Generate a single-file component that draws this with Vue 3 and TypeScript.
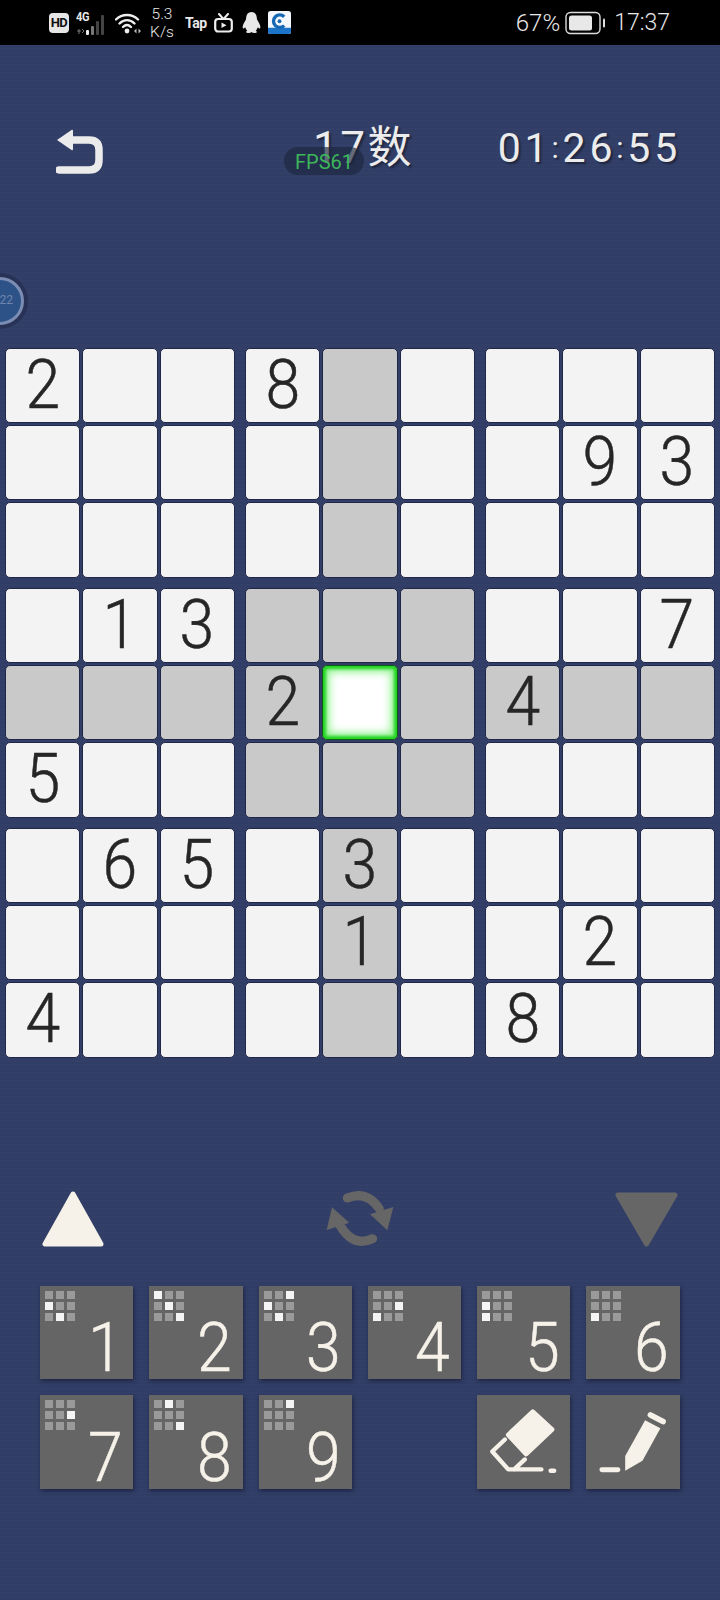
<script setup lang="ts">
const givens: Record<string, number> = {
  '0-0': 2, '0-3': 8, '1-7': 9, '1-8': 3, '3-1': 1, '3-2': 3, '3-8': 7,
  '4-3': 2, '4-6': 4, '5-0': 5, '6-1': 6, '6-2': 5, '6-4': 3, '7-4': 1,
  '7-7': 2, '8-0': 4, '8-6': 8,
}
interface Cell { key: string; value: string; grey: boolean; sel: boolean }
const blocks: Cell[][] = []
for (let br = 0; br < 3; br++) {
  for (let bc = 0; bc < 3; bc++) {
    const cells: Cell[] = []
    for (let r = br * 3; r < br * 3 + 3; r++) {
      for (let c = bc * 3; c < bc * 3 + 3; c++) {
        const v = givens[`${r}-${c}`]
        cells.push({
          key: `${r}-${c}`,
          value: v ? String(v) : '',
          sel: r === 4 && c === 4,
          grey: r === 4 || c === 4 || (br === 1 && bc === 1),
        })
      }
    }
    blocks.push(cells)
  }
}
const keys: { n: number; on: number[] }[] = [
  { n: 1, on: [3, 7] },
  { n: 2, on: [0, 4, 8] },
  { n: 3, on: [2, 3, 7] },
  { n: 4, on: [5, 6] },
  { n: 5, on: [3, 6] },
  { n: 6, on: [6] },
  { n: 7, on: [5] },
  { n: 8, on: [1, 8] },
  { n: 9, on: [2] },
]
const mini = [0, 1, 2, 3, 4, 5, 6, 7, 8]
</script>

<template>
  <div class="page">
    <div class="status">
      <div class="hd">HD</div>
      <div class="net">
        <span class="g4">4G</span>
        <svg class="sig" width="34" height="22" viewBox="0 0 34 22">
          <path d="M2 17h4M7 15l2 2-2 2M4 15v5" stroke="#777" stroke-width="1" fill="none" />
          <rect x="11" y="16" width="3" height="5" rx="1" fill="#eee" />
          <rect x="16" y="12" width="3" height="9" rx="1" fill="#777" />
          <rect x="21" y="7" width="3" height="14" rx="1" fill="#444" />
          <rect x="26" y="1" width="3" height="20" rx="1" fill="#444" />
        </svg>
      </div>
      <svg class="wifi" width="26" height="22" viewBox="0 0 26 22">
        <path d="M1 7.500C7 1.500 17 1.500 23 7.500" stroke="#eee" stroke-width="2.400" fill="none" stroke-linecap="round" />
        <path d="M4.500 11.500C9 7 15 7 19.500 11.500" stroke="#eee" stroke-width="2.400" fill="none" stroke-linecap="round" />
        <path d="M8 15C10.500 12.500 13.500 12.500 16 15" stroke="#eee" stroke-width="2.400" fill="none" stroke-linecap="round" />
        <circle cx="12" cy="19" r="2.400" fill="#eee" />
        <path d="M19 19l2.500-2.500v5zM26 19l-2.500-2.500v5z" fill="#bbb" />
      </svg>
      <div class="speed"><span>5.3</span><span>K/s</span></div>
      <span class="tap">Tap</span>
      <svg class="tv" width="19" height="20" viewBox="0 0 19 20">
        <rect x="1.200" y="6" width="16.600" height="12.500" rx="3" fill="none" stroke="#eee" stroke-width="2.200" />
        <path d="M5 1l3.500 4M14 1l-3.500 4" stroke="#eee" stroke-width="2" stroke-linecap="round" />
        <path d="M7.500 9.500l5 2.700-5 2.700z" fill="#eee" />
      </svg>
      <svg class="qq" width="21" height="23" viewBox="0 0 20 22">
        <path d="M10 1C6 1 4.800 4.500 4.800 8C3.500 10.500 1.500 13 1.500 15.500C1.500 17 2.500 17 4 15.500C4.500 17 5 18 6 18.800C4.500 19.500 4 21 6.500 21C8 21 9.500 20.500 10 20C10.500 20.500 12 21 13.500 21C16 21 15.500 19.500 14 18.800C15 18 15.500 17 16 15.500C17.500 17 18.500 17 18.500 15.500C18.500 13 16.500 10.500 15.200 8C15.200 4.500 14 1 10 1Z" fill="#e8e8e8" />
      </svg>
      <svg class="app" width="23" height="23" viewBox="0 0 22 22">
        <rect width="22" height="22" rx="2.500" fill="#f4f8fc" />
        <path d="M0 16h22v4a2 2 0 0 1-2 2H2a2 2 0 0 1-2-2z" fill="#1c74c8" />
        <path d="M15.500 5.500A6 6 0 1 0 15.500 14" fill="none" stroke="#1568b4" stroke-width="3.200" />
        <circle cx="11" cy="9.800" r="1.800" fill="#1568b4" />
      </svg>
      <div class="status-right">
        <span class="pct">67%</span>
        <svg class="bat" width="42" height="24" viewBox="0 0 42 24">
          <rect x="1" y="1.500" width="34" height="21" rx="4.500" fill="none" stroke="#ddd" stroke-width="1.400" />
          <rect x="4" y="4.500" width="23" height="15" rx="2.500" fill="#e8e8e8" />
          <rect x="38" y="7.500" width="2" height="9" rx="1" fill="#ddd" />
        </svg>
        <span class="clock">17:37</span>
      </div>
    </div>

    <div class="header">
      <svg class="back" width="50" height="46" viewBox="0 0 50 46">
        <path d="M15 12H33Q43 12 43 22V32Q43 42 33 42H3" fill="none" stroke="#ebebeb" stroke-width="7.500" stroke-linecap="round" />
        <path d="M1 12L15.500 2Q17 1 17 3V21Q17 23 15.500 22Z" fill="#ebebeb" />
      </svg>
      <div class="title">17数</div>
      <div class="time">01<span class="colon">:</span>26<span class="colon">:</span>55</div>
      <div class="fps">FPS61</div>
    </div>

    <div class="ball"><span>22</span></div>

    <div class="board">
      <div v-for="(block, i) in blocks" :key="i" class="block">
        <div
          v-for="cell in block"
          :key="cell.key"
          class="cell"
          :class="{ grey: cell.grey, sel: cell.sel }"
        ><span class="digit">{{ cell.value }}</span></div>
      </div>
    </div>

    <div class="controls">
      <svg width="68" height="90" viewBox="0 0 68 90">
        <path d="M33 24L5 74H61Z" fill="#f6f2e9" stroke="#f6f2e9" stroke-width="5" stroke-linejoin="round" />
      </svg>
      <svg width="100" height="90" viewBox="0 0 300 270">
        <g fill="none" stroke="#666" stroke-width="27" stroke-linecap="round">
          <path d="M112 84Q170 60 208 116" />
          <path d="M188 206Q128 234 88 163" />
        </g>
        <path d="M180 133L250 111L232 181Z" fill="#666" />
        <path d="M66 112L118 158L50 180Z" fill="#666" />
      </svg>
      <svg width="68" height="90" viewBox="0 0 68 90">
        <path d="M6 25H63L34.500 74Z" fill="#666" stroke="#666" stroke-width="5" stroke-linejoin="round" />
      </svg>
    </div>

    <div class="keys">
      <div v-for="k in keys" :key="k.n" class="key">
        <div class="mini">
          <i v-for="m in mini" :key="m" :class="{ on: k.on.includes(m) }"></i>
        </div>
        <span class="key-num">{{ k.n }}</span>
      </div>
      <div class="key tool-first">
        <svg width="93" height="93" viewBox="0 0 280 280">
          <path d="M168 50L226 104L148 178L94 120Z" fill="#f6f2e9" stroke="#f6f2e9" stroke-width="14" stroke-linejoin="round" />
          <path d="M84 134L46 170L94 224H194M144 194L112 224" fill="none" stroke="#f6f2e9" stroke-width="13" stroke-linecap="round" stroke-linejoin="round" />
          <path d="M222 228H232" stroke="#f6f2e9" stroke-width="14" stroke-linecap="round" />
        </svg>
      </div>
      <div class="key">
        <svg width="93" height="93" viewBox="0 0 280 280">
          <path d="M194 60L232 80" stroke="#f6f2e9" stroke-width="17" stroke-linecap="round" />
          <path d="M178 76L224 100L170 198L118 228L118 184Z" fill="#f6f2e9" />
          <path d="M48 225H96" stroke="#f6f2e9" stroke-width="15" stroke-linecap="round" />
        </svg>
      </div>
    </div>
  </div>
</template>

<style scoped>
.page {
  position: relative;
  width: 720px;
  height: 1600px;
  overflow: hidden;
  background: repeating-linear-gradient(180deg, #333f68 0 2px, #303d65 2px 4px);
  font-family: Roboto, "Noto Sans CJK SC", sans-serif;
}
.status {
  height: 45px;
  background: #000;
  color: #e8e8e8;
  display: flex;
  align-items: center;
  padding-left: 49px;
  box-sizing: border-box;
}
.hd {
  width: 20px;
  height: 20px;
  border-radius: 4px;
  background: #e6e6e6;
  color: #111;
  font-size: 13px;
  font-weight: 700;
  line-height: 20px;
  text-align: center;
  letter-spacing: -0.5px;
}
.net {
  position: relative;
  width: 36px;
  height: 24px;
  margin-left: 6px;
}
.g4 {
  position: absolute;
  left: 1px;
  top: -2px;
  font-size: 13px;
  font-weight: 700;
  letter-spacing: -0.3px;
  transform: scaleX(0.85);
  transform-origin: left;
}
.sig { position: absolute; left: 0; top: 3px; }
.wifi { margin-left: 4px; }
.speed {
  display: flex;
  flex-direction: column;
  align-items: center;
  width: 26px;
  margin-left: 8px;
  font-size: 15.500px;
  line-height: 18px;
  font-weight: 300;
}
.tap {
  margin-left: 10px;
  font-size: 14px;
  font-weight: 700;
  letter-spacing: -0.5px;
}
.tv { margin-left: 7px; }
.qq { margin-left: 8px; }
.app { margin-left: 6px; }
.status-right {
  margin-left: auto;
  margin-right: 50px;
  display: flex;
  align-items: center;
  font-size: 23px;
  font-weight: 300;
}
.pct { font-size: 24px; }
.bat { margin: 0 7px 0 5px; }

.header {
  height: 60px;
  margin-top: 73px;
  display: flex;
  align-items: center;
  padding-left: 56px;
  padding-right: 39px;
  color: #ececec;
}
.back { margin-top: 6px; }
.title {
  margin-left: 207px;
  font-size: 44px;
  font-weight: 400;
  line-height: 60px;
  letter-spacing: 2.500px;
  text-shadow: 2px 2px 2px rgba(0, 0, 0, 0.4);
}
.time {
  margin-left: auto;
  font-size: 41px;
  font-weight: 400;
  letter-spacing: 3.800px;
  text-shadow: 2px 2px 2px rgba(0, 0, 0, 0.4);
}
.colon {
  font-size: 30px;
  vertical-align: 4px;
}
.fps {
  position: absolute;
  left: 284px;
  top: 147px;
  width: 80px;
  height: 28px;
  border-radius: 14px;
  background: rgba(28, 38, 62, 0.65);
  color: #3db65a;
  font-size: 20px;
  line-height: 30px;
  text-align: center;
}
.ball {
  position: absolute;
  left: -24px;
  top: 277px;
  width: 48px;
  height: 48px;
  box-sizing: border-box;
  border-radius: 50%;
  border: 3.500px solid #7c8db3;
  background: #2d5288;
  box-shadow: 0 0 0 4px rgba(35, 45, 80, 0.7);
  color: #6f85ab;
  font-size: 12px;
  line-height: 41px;
  text-align: right;
  padding-right: 8px;
}

.board {
  margin-top: 169.800px;
  padding-left: 5px;
  display: grid;
  grid-template-columns: repeat(3, 230px);
  gap: 10px;
}
.block {
  display: grid;
  grid-template-columns: repeat(3, 75.330px);
  grid-auto-rows: 75.330px;
  gap: 2px;
}
.cell {
  box-sizing: border-box;
  border: 1px solid #1f2647;
  border-radius: 5px;
  background: #f3f3f3;
  color: #262626;
  font-size: 68px;
  font-weight: 300;
  line-height: 73px;
  text-align: center;
}
.digit {
  display: inline-block;
  transform: scaleX(0.92);
  -webkit-text-stroke: 0.5px currentColor;
}
.cell.grey { background: #c9c9c9; }
.cell.sel {
  background: #fff;
  border-color: #0d5a12;
  box-shadow: inset 0 0 3px 3px #22d422, inset 0 0 8px 6px #8af28a;
}

.controls {
  margin-top: 112.200px;
  height: 90px;
  padding: 0 40px;
  display: flex;
  justify-content: space-between;
}
.keys {
  margin-top: 26px;
  padding-left: 40px;
  display: grid;
  grid-template-columns: repeat(6, 93.300px);
  grid-auto-rows: 93.300px;
  column-gap: 16px;
  row-gap: 16px;
}
.key {
  position: relative;
  background: #656565;
  box-shadow: 1px 2px 4px rgba(20, 25, 50, 0.7);
  color: #f6f2e9;
}
.key svg { display: block; }
.tool-first { grid-column: 5; }
.mini {
  position: absolute;
  left: 5px;
  top: 5px;
  display: grid;
  grid-template-columns: repeat(3, 8px);
  grid-auto-rows: 8px;
  gap: 3px;
}
.mini i { background: #9a9a9a; }
.mini i.on { background: #f4f4f4; }
.key-num {
  position: absolute;
  right: 11px;
  bottom: -9px;
  font-size: 68px;
  font-weight: 300;
  line-height: 80px;
  transform: scaleX(0.92);
  transform-origin: right;
  -webkit-text-stroke: 0.5px currentColor;
}
</style>
